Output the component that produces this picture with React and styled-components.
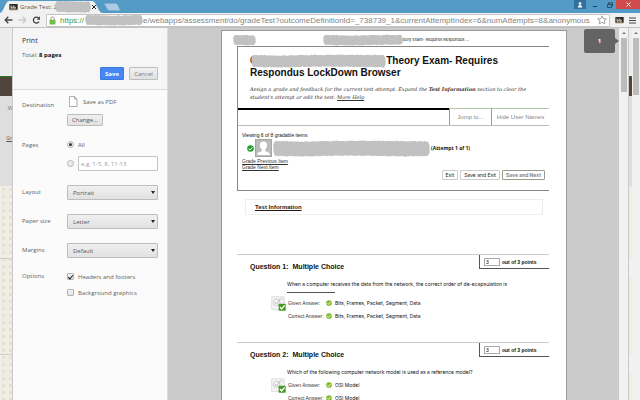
//dependencies
import { useState } from "react"
import styled, { createGlobalStyle } from "styled-components"

const GlobalStyle = createGlobalStyle`
    *, *::before, *::after{
        box-sizing: border-box;
    }
    html, body, #root{
        height: 100%;
        margin: 0;
    }
    body{
        overflow: hidden;
        font-family: "Open Sans", "Noto Sans", sans-serif;
    }
    h1, h2, h3, p{
        margin: 0;
        font-weight: normal;
    }
    button, input, select{
        font-family: inherit;
        margin: 0;
        padding: 0;
    }
`

const questions = [
    {
        id: 1,
        text: "When a computer receives the data from the network, the correct order of de-ecapsulation is",
        blank: true,
        answer: "Bits, Frames, Packet, Segment, Data",
    },
    {
        id: 2,
        text: "Which of the following computer network model is used as a reference model?",
        blank: false,
        answer: "OSI Model",
    },
]

// rough brush stroke that hides private text
const Scribble = ({width, height, shift}) => {
    const rough = (seed) => Math.abs(Math.sin(seed * 12.9898) * 43758.5453) % 1
    const top = []
    const bottom = []
    for(let x = 2; x <= width - 2; x += 1){
        top.push(`${x},${(0.6 + rough(x) * 0.9 + Math.sin(x * 0.05) * 0.4).toFixed(1)}`)
        bottom.unshift(`${x},${(height - 0.6 - rough(x + 500) * 0.9 + Math.sin(x * 0.06) * 0.4).toFixed(1)}`)
    }
    const points = [`0.6,${height * 0.7}`, `0.2,${height * 0.3}`, ...top, `${width - 0.6},${height * 0.3}`, `${width - 0.2},${height * 0.7}`, ...bottom]
    return <Stroke $shift={shift} width={width} height={height} viewBox={`0 0 ${width} ${height}`} aria-hidden="true">
        <polygon points={points.join(" ")} fill="#c1c1c1"/>
    </Stroke>
}

const GreenCheck = ({size, color}) => (
    <svg width={size} height={size} viewBox="0 0 14 14" aria-hidden="true">
        <circle cx="7" cy="7" r="6.6" fill={color}/>
        <path d="M3.4 7.4l2.6 2.8 4.8-5.4" fill="none" stroke="#fff" strokeWidth="2"/>
    </svg>
)

const AnswerIcon = () => (
    <svg width="15" height="15" viewBox="0 0 45 45" aria-hidden="true">
        <rect x="2" y="2" width="38" height="39" rx="2" fill="#f4f4f4" stroke="#d2d2d2" strokeWidth="2"/>
        <circle cx="17" cy="19" r="10" fill="none" stroke="#bcbcbc" strokeWidth="2"/>
        <path d="M12 18l5 6L28 8" fill="none" stroke="#bcbcbc" strokeWidth="3"/>
        <circle cx="32" cy="8" r="3" fill="none" stroke="#cfcfcf" strokeWidth="2"/>
        <rect x="23" y="23" width="21" height="21" rx="2" fill="#3f9c1c"/>
        <path d="M27 33l5 6 9-11" fill="none" stroke="#fff" strokeWidth="4"/>
    </svg>
)

const BbIcon = () => (
    <svg width="9" height="8" viewBox="0 0 27 24" aria-hidden="true">
        <rect x="1" y="3" width="25" height="17" fill="#2c2822"/>
        <path d="M6 7v9M6 12h4v4H6M14 7v9M14 12h5v4h-5" fill="none" stroke="#fff" strokeWidth="2"/>
        <path d="M1 21h25" stroke="#b99c58" strokeWidth="2"/>
    </svg>
)

const Browser = () => (
    <>
        <TabStrip>
            <Tab>
                <TabShape viewBox="0 0 106 13" preserveAspectRatio="none" aria-hidden="true">
                    <path d="M0 13C4 12 5 2 9 1H94c4 0 6 11 10 12z" fill="#f1f1f1"/>
                </TabShape>
                <BbIcon/>
                <TabTitle>Grade Test: 2</TabTitle>
                <Scribble width={36} height={13} shift={-2}/>
                <CloseTab type="button" aria-label="Close tab">
                    <svg width="4" height="4" viewBox="0 0 4 4"><path d="M0 0l4 4M4 0L0 4" stroke="#222" strokeWidth="1"/></svg>
                </CloseTab>
            </Tab>
            <NewTab type="button" aria-label="New tab">
                <svg width="17" height="8" viewBox="0 0 17 8"><path d="M1 .5h11q1 0 1.500 1l2.500 5.500q0 .6-1 .6H5q-1 0-1.500-1L.5 1.200q0-.7.5-.7z" fill="#a9cce2" stroke="#7fa9c4" strokeWidth=".5"/></svg>
            </NewTab>
            <WindowButtons>
                <WindowButton type="button" aria-label="Profile" $width={12} $color="#31709c">
                    <svg width="6" height="6" viewBox="0 0 6 6"><circle cx="3" cy="1.500" r="1.300" fill="#fff"/><path d="M.8 5.500q0-2.500 2.200-2.500t2.200 2.500z" fill="#fff"/></svg>
                </WindowButton>
                <WindowButton type="button" aria-label="Minimize" $width={17}>
                    <svg width="6" height="6" viewBox="0 0 6 6"><path d="M1 4.500h4" stroke="#1d3d52" strokeWidth="1"/></svg>
                </WindowButton>
                <WindowButton type="button" aria-label="Restore" $width={13}>
                    <svg width="6" height="6" viewBox="0 0 6 6"><path d="M.5 2.500h4v3h-4zM1.500 2V.8h4v3H5" fill="none" stroke="#1d3d52" strokeWidth=".8"/></svg>
                </WindowButton>
                <WindowButton type="button" aria-label="Close" $width={24} $color="#d0494b">
                    <svg width="5" height="5" viewBox="0 0 5 5"><path d="M.5.5l4 4M4.500.5l-4 4" stroke="#fff" strokeWidth="1"/></svg>
                </WindowButton>
            </WindowButtons>
        </TabStrip>
        <Toolbar>
            <IconButton type="button" aria-label="Back">
                <svg width="9" height="8" viewBox="0 0 9 8"><path d="M4.300.7L1.200 4l3.100 3.300M1.400 4H8.500" fill="none" stroke="#444" strokeWidth="1.300"/></svg>
            </IconButton>
            <IconButton type="button" aria-label="Forward">
                <svg width="9" height="8" viewBox="0 0 9 8"><path d="M4.700.7L7.800 4 4.700 7.300M7.600 4H.5" fill="none" stroke="#c8c8c8" strokeWidth="1.300"/></svg>
            </IconButton>
            <IconButton type="button" aria-label="Reload">
                <svg width="9" height="8" viewBox="0 0 9 8"><path d="M7 5.600A3 3 0 1 1 6.600 2" fill="none" stroke="#444" strokeWidth="1.300"/><path d="M8 .3v3.400H4.600z" fill="#444"/></svg>
            </IconButton>
            <AddressBar>
                <svg width="7" height="9" viewBox="0 0 7 9" aria-hidden="true"><path d="M1.800 4V2.600a1.700 1.700 0 0 1 3.400 0V4" fill="none" stroke="#9a9a9a" strokeWidth="1"/><rect x=".5" y="3.800" width="6" height="4.700" rx=".6" fill="#6cc04a"/></svg>
                <Address><Secure>https://</Secure><Scribble width={58} height={12} shift={1}/><span>e/webapps/assessment/do/gradeTest?outcomeDefinitionId=_738739_1&amp;currentAttemptIndex=6&amp;numAttempts=8&amp;anonymous</span></Address>
                <svg width="10" height="10" viewBox="0 0 10 10" aria-hidden="true"><path d="M5 .8l1.200 2.900 3.200.2-2.400 2 .8 3.100L5 7.300 2.200 9 3 5.900l-2.400-2 3.200-.2z" fill="#fff" stroke="#8d8d8d" strokeWidth=".8"/></svg>
            </AddressBar>
            <BbIcon/>
            <IconButton type="button" aria-label="Menu">
                <svg width="7" height="7" viewBox="0 0 7 7"><path d="M0 1h7M0 3.500h7M0 6h7" stroke="#444" strokeWidth="1.200"/></svg>
            </IconButton>
        </Toolbar>
    </>
)

const PrintPanel = () => {
    const [pages, setPages] = useState("all")
    const [headers, setHeaders] = useState(true)
    const [graphics, setGraphics] = useState(false)

    return <Panel>
        <PanelHeader>
            <PanelTitle>Print</PanelTitle>
            <Total>Total: <b>8 pages</b></Total>
            <PanelActions>
                <PrimaryButton type="button">Save</PrimaryButton>
                <CancelButton type="button">Cancel</CancelButton>
            </PanelActions>
        </PanelHeader>
        <Settings>
            <Setting>
                <SettingLabel $line={18}>Destination</SettingLabel>
                <SettingBody>
                    <Destination>
                        <svg width="12" height="11" viewBox="0 0 12 11" aria-hidden="true"><path d="M2.500.5h5l2.500 2.500v7.500H2.500zM7.500.5V3H10" fill="#fff" stroke="#9b9b9b" strokeWidth=".8"/></svg>
                        Save as PDF
                    </Destination>
                    <PanelButton type="button">Change...</PanelButton>
                </SettingBody>
            </Setting>
            <Setting>
                <SettingLabel $line={10}>Pages</SettingLabel>
                <SettingBody>
                    <Choice>
                        <Radio type="radio" name="pages" checked={pages === "all"} onChange={() => setPages("all")}/>
                        All
                    </Choice>
                    <RangeRow>
                        <Radio type="radio" name="pages" aria-label="Page range" checked={pages === "range"} onChange={() => setPages("range")}/>
                        <RangeInput type="text" aria-label="Pages to print" placeholder="e.g. 1-5, 8, 11-13"/>
                    </RangeRow>
                </SettingBody>
            </Setting>
            <SelectSetting id="layout" label="Layout" options={["Portrait", "Landscape"]}/>
            <SelectSetting id="paper-size" label="Paper size" options={["Letter", "Legal"]}/>
            <SelectSetting id="margins" label="Margins" options={["Default", "None"]}/>
            <Setting>
                <SettingLabel $line={8}>Options</SettingLabel>
                <SettingBody>
                    <Choice>
                        <Checkbox type="checkbox" checked={headers} onChange={() => setHeaders(!headers)}/>
                        Headers and footers
                    </Choice>
                    <Choice>
                        <Checkbox type="checkbox" checked={graphics} onChange={() => setGraphics(!graphics)}/>
                        Background graphics
                    </Choice>
                </SettingBody>
            </Setting>
        </Settings>
    </Panel>
}

const SelectSetting = ({id, label, options}) => (
    <Setting>
        <SettingLabel as="label" htmlFor={id} $line={15}>{label}</SettingLabel>
        <SelectBox>
            <Select id={id}>
                {options.map(option => <option key={option}>{option}</option>)}
            </Select>
        </SelectBox>
    </Setting>
)

const Question = ({question}) => {
    const {id, text, blank, answer} = question
    return <QuestionSection>
        <QuestionHeader>
            <QuestionTitle><span>Question {id}:</span><span>Multiple Choice</span></QuestionTitle>
            <Points>
                <PointsInput type="text" defaultValue="3" id={`points-${id}`}/>
                <label htmlFor={`points-${id}`}>out of 3 points</label>
            </Points>
        </QuestionHeader>
        <QuestionText>{text}</QuestionText>
        {blank && <Blank/>}
        <Answers>
            <AnswerIcon/>
            <AnswerRows>
                <AnswerLabel>Given Answer:</AnswerLabel><GreenCheck size={6} color="#7db928"/><AnswerText>{answer}</AnswerText>
                <AnswerLabel>Correct Answer:</AnswerLabel><GreenCheck size={6} color="#7db928"/><AnswerText>{answer}</AnswerText>
            </AnswerRows>
        </Answers>
    </QuestionSection>
}

const Page = () => (
    <Sheet>
        <RunningHead>
            <Scribble width={23} height={12} shift={0}/>
            <RunningTitle><Scribble width={80} height={12} shift={0}/>eory Exam- Requires Respondus ...</RunningTitle>
        </RunningHead>
        <Frame>
            <Intro>
                <ExamTitle>C<Scribble width={135} height={14} shift={-6}/>Theory Exam- Requires<br/>Respondus LockDown Browser</ExamTitle>
                <Instructions>
                    Assign a grade and feedback for the current test attempt. Expand the <b>Test Information</b> section to clear the<br/>
                    student's attempt or edit the test. <a href="#help">More Help</a>
                </Instructions>
            </Intro>
            <FrameTabs>
                <FrameSpacer/>
                <FrameTab type="button" $width={42}>Jump to...</FrameTab>
                <FrameTab type="button" $width={58}>Hide User Names</FrameTab>
            </FrameTabs>
            <Attempt>
                <p>Viewing 6 of 8 gradable items</p>
                <Student>
                    <GreenCheck size={7} color="#1fa32c"/>
                    <svg width="17" height="18" viewBox="0 0 17 18" aria-hidden="true">
                        <rect x=".5" y=".5" width="16" height="17" fill="#bcbcbc" stroke="#a5a5a5"/>
                        <path d="M8.500 2.500c5 0 4 6 1.600 8.200v1.300l4.400 2V16h-12v-2l4.400-2v-1.300C4.500 8.500 3.500 2.500 8.500 2.500z" fill="#fff"/>
                    </svg>
                    <Scribble width={157} height={17} shift={0}/>
                    <AttemptCount>(Attempt 1 of 1)</AttemptCount>
                </Student>
                <GradeLink href="#previous">Grade Previous Item</GradeLink>
                <GradeLink href="#next">Grade Next Item</GradeLink>
                <AttemptActions>
                    <PageButton type="button">Exit</PageButton>
                    <PageButton type="button">Save and Exit</PageButton>
                    <PageButton type="button" $muted>Save and Next</PageButton>
                </AttemptActions>
            </Attempt>
        </Frame>
        <TestInfo><a href="#info">Test Information</a></TestInfo>
        {questions.map(question => <Question key={question.id} question={question}/>)}
    </Sheet>
)

const App = () => (
    <Window>
        <GlobalStyle/>
        <Browser/>
        <Content>
            <SiteEdge $width={12}>
                <SiteTop/><SiteBanner/>
                <SiteGrey><span>Vi</span><u>Gr</u></SiteGrey>
                <SitePattern/>
            </SiteEdge>
            <PrintPanel/>
            <Preview>
                <Page/>
                <PageNumber>1</PageNumber>
            </Preview>
            <ScrollBar $width={9}><ScrollArrow/><ScrollThumb $height={54}/></ScrollBar>
            <SiteEdge $width={4} $line>
                <SiteTop/><SiteBanner/><SiteGrey/><SiteCards/>
            </SiteEdge>
            <ScrollBar $width={8}><ScrollArrow/><ScrollThumb $height={57}/></ScrollBar>
        </Content>
    </Window>
)

const Window = styled.div`
    display: flex;
    flex-direction: column;
    height: 100vh;
    background: #f1f1f1;
`
const Stroke = styled.svg`
    flex: none;
    display: inline-block;
    vertical-align: middle;
    margin-left: ${props => props.$shift}px;
`
// browser chrome
const TabStrip = styled.div`
    display: flex;
    align-items: flex-start;
    height: 13px;
    flex: none;
    background: #539ac7;
`
const Tab = styled.div`
    position: relative;
    display: flex;
    align-items: center;
    width: 104px;
    height: 13px;
    padding-left: 9px;
    > *{
        position: relative;
    }
`
const TabShape = styled.svg`
    && {
        position: absolute;
    }
    left: 0;
    top: 0;
    width: 100%;
    height: 100%;
`
const TabTitle = styled.span`
    margin-left: 2px;
    font-size: 6px;
    color: #555;
    white-space: nowrap;
`
const CloseTab = styled.button`
    display: flex;
    border: none;
    background: none;
    margin-left: auto;
    margin-right: 8px;
`
const NewTab = styled.button`
    display: flex;
    border: none;
    background: none;
    padding-top: 3px;
`
const WindowButtons = styled.div`
    display: flex;
    margin-left: auto;
`
const WindowButton = styled.button`
    display: flex;
    align-items: center;
    justify-content: center;
    width: ${props => props.$width}px;
    height: 9px;
    border: none;
    background: ${props => props.$color || "transparent"};
`
const Toolbar = styled.div`
    display: flex;
    align-items: center;
    gap: 5px;
    height: 15px;
    flex: none;
    padding: 0 4px;
    background: #f1f1f1;
    border-bottom: 1px solid #c2c2c2;
`
const IconButton = styled.button`
    display: flex;
    border: none;
    background: none;
`
const AddressBar = styled.div`
    display: flex;
    align-items: center;
    flex: 1;
    min-width: 0;
    height: 13px;
    padding: 0 2px;
    border: 1px solid #c4c4c4;
    border-radius: 1px;
    background: #fff;
`
const Address = styled.div`
    display: flex;
    align-items: center;
    flex: 1;
    min-width: 0;
    margin-left: 4px;
    font-family: "Liberation Sans", Arial, sans-serif;
    font-size: 8px;
    line-height: 11px;
    color: #858585;
    white-space: nowrap;
`
const Secure = styled.span`
    color: #3f9a45;
`
// site behind the dialog
const Content = styled.div`
    display: flex;
    flex: 1;
    min-height: 0;
`
const SiteEdge = styled.div`
    display: flex;
    flex-direction: column;
    flex: none;
    width: ${props => props.$width}px;
    border-left: ${props => props.$line ? "1px solid #c9c9c9" : "none"};
    overflow: hidden;
`
const SiteTop = styled.div`
    height: 48px;
    background: #ececec;
`
const SiteBanner = styled.div`
    height: 20px;
    border-top: 1px solid #1f7a1c;
    background: #51453b;
`
const SiteGrey = styled.div`
    display: flex;
    flex-direction: column;
    align-items: flex-end;
    gap: 20px;
    height: 90px;
    padding-top: 7px;
    background: #dedede;
    font-size: 5px;
    line-height: 10px;
    color: #555;
`
const SitePattern = styled.div`
    flex: 1;
    background-color: #efede4;
    background-image:
        linear-gradient(transparent 72px, #cfcdc6 72px, #cfcdc6 73px, transparent 73px, transparent 168px, #cfcdc6 168px, #cfcdc6 169px, transparent 169px),
        radial-gradient(circle, #e4e0d4 2px, transparent 2px);
    background-size: 100% 100%, 7px 7px;
`
// the pattern shows between the white cards of the site
const SiteCards = styled.div`
    flex: 1;
    background: linear-gradient(#efede0 73px, #f3f3f3 73px, #f3f3f3 91px, #efede0 91px, #efede0 169px, #f3f3f3 169px, #f3f3f3 187px, #efede0 187px);
`
const ScrollBar = styled.div`
    display: flex;
    flex-direction: column;
    align-items: center;
    flex: none;
    width: ${props => props.$width}px;
    background: #f1f1f1;
`
const ScrollArrow = styled.div`
    margin: 4px 0 3px;
    border: 2px solid transparent;
    border-top: none;
    border-bottom-color: #777;
`
const ScrollThumb = styled.div`
    width: 6px;
    height: ${props => props.$height}px;
    margin-top: 1px;
    background: #bcbcbc;
`
// print settings
const Panel = styled.aside`
    flex: none;
    width: 156px;
    border-left: 1px solid #c9c9c9;
    border-right: 1px solid #dcdcdc;
    background: #fbfbfb;
    color: #5f5f5f;
    font-size: 6px;
    line-height: 8px;
`
const PanelHeader = styled.header`
    padding: 7px 9px 9px;
    background: #f6f6f6;
    border-bottom: 1px solid #d9d9d9;
`
const PanelTitle = styled.h1`
    font-size: 7px;
    line-height: 12px;
    color: #333;
`
const Total = styled.p`
    margin-top: 4px;
    b{
        color: #111;
    }
`
const PanelActions = styled.div`
    display: flex;
    justify-content: flex-end;
    gap: 5px;
    margin-top: 8px;
`
const PanelButton = styled.button`
    width: 36px;
    height: 12px;
    border: 1px solid #bdbdbd;
    border-radius: 1px;
    background: linear-gradient(#f0f0f0, #e1e1e1);
    color: #555;
    font-size: 6px;
    line-height: 8px;
`
const CancelButton = styled(PanelButton)`
    width: 29px;
    height: 13px;
    color: #777;
`
const PrimaryButton = styled(PanelButton)`
    width: 24px;
    height: 13px;
    border-color: #3b79e0;
    background: #4787f3;
    color: #fff;
    font-weight: bold;
`
const Settings = styled.div`
    display: flex;
    flex-direction: column;
    gap: 14px;
    padding: 6px 9px;
`
const Setting = styled.div`
    display: grid;
    grid-template-columns: 45px minmax(0, 1fr);
`
const SettingLabel = styled.span`
    line-height: ${props => props.$line}px;
`
const SettingBody = styled.div`
    display: flex;
    flex-direction: column;
    align-items: flex-start;
    gap: 7px;
`
const Destination = styled.div`
    display: flex;
    align-items: center;
    gap: 4px;
    height: 11px;
`
const Choice = styled.label`
    display: flex;
    align-items: center;
    gap: 4px;
    height: 9px;
`
const RangeRow = styled.div`
    display: flex;
    align-items: center;
    gap: 4px;
    width: 100%;
`
const Tick = styled.input`
    appearance: none;
    flex: none;
    display: grid;
    place-items: center;
    width: 7px;
    height: 7px;
    border: 1px solid #b5b5b5;
    background: linear-gradient(#f4f4f4, #e2e2e2);
`
const Radio = styled(Tick)`
    border-radius: 50%;
    &:checked::after{
        content: "";
        width: 3px;
        height: 3px;
        border-radius: 50%;
        background: #333;
    }
`
const Checkbox = styled(Tick)`
    border-radius: 1px;
    &:checked::after{
        content: "";
        width: 3px;
        height: 5px;
        border: solid #222;
        border-width: 0 1px 1px 0;
        transform: rotate(40deg);
    }
`
const RangeInput = styled.input`
    flex: 1;
    width: 0;
    min-width: 0;
    height: 15px;
    padding: 0 2px;
    border: 1px solid #c4c4c4;
    border-radius: 1px;
    background: #fff;
    font-size: 6px;
    &::placeholder{
        color: #9c9c9c;
    }
`
const SelectBox = styled.div`
    position: relative;
    height: 15px;
    &::after{
        content: "";
        position: absolute;
        right: 3px;
        top: 6px;
        border: 2px solid transparent;
        border-top: 3px solid #222;
        border-bottom: none;
        pointer-events: none;
    }
`
const Select = styled.select`
    appearance: none;
    display: block;
    width: 100%;
    height: 15px;
    padding: 0 5px;
    border: 1px solid #bdbdbd;
    border-radius: 1px;
    background: linear-gradient(#f0f0f0, #e1e1e1);
    color: #555;
    font-size: 6px;
`
// print preview
const Preview = styled.main`
    position: relative;
    flex: 1;
    min-width: 0;
    overflow: hidden;
    padding: 2px 52px 0 53px;
    background: #cbcbcb;
`
const PageNumber = styled.div`
    position: absolute;
    top: 1px;
    right: 4px;
    width: 31px;
    height: 24px;
    border-radius: 2px;
    background: #646464;
    color: #fff;
    font: bold 6px/24px "Open Sans", sans-serif;
    text-align: center;
    &::after{
        content: "";
        position: absolute;
        left: 31px;
        top: 9px;
        border: 3px solid transparent;
        border-left: 4px solid #646464;
        border-right: none;
    }
`
const Sheet = styled.article`
    min-height: 100%;
    padding: 3px 17px 0 15px;
    border: 1px solid #999;
    border-width: 1px 1px 0 1px;
    background: #fff;
    color: #111;
    font-family: "Liberation Sans", Arial, sans-serif;
    font-size: 5px;
    line-height: 6px;
    svg{
        flex: none;
    }
`
const RunningHead = styled.div`
    display: flex;
    align-items: center;
    justify-content: space-between;
    height: 12px;
    margin-left: -4px;
`
const RunningTitle = styled.div`
    display: flex;
    align-items: center;
    margin-right: 80px;
    font-family: Inter, sans-serif;
    font-size: 4px;
    white-space: nowrap;
`
const Frame = styled.section`
    border: 1px solid #888;
    border-right: none;
`
const Intro = styled.div`
    height: 61px;
    padding: 7px 0 0 12px;
`
const ExamTitle = styled.h1`
    font-size: 10px;
    font-weight: bold;
    line-height: 10px;
    white-space: nowrap;
`
const Instructions = styled.p`
    margin-top: 7px;
    font: italic 5px/8px "DejaVu Serif", serif;
    color: #333;
    white-space: nowrap;
    a{
        color: inherit;
    }
`
const FrameTabs = styled.div`
    display: flex;
    height: 18px;
    border-bottom: 1px solid #bbb;
`
const FrameSpacer = styled.div`
    flex: 1;
    border-top: 2px solid #000;
`
const FrameTab = styled.button`
    width: ${props => props.$width}px;
    border: none;
    border-top: 1px solid #b5c7ab;
    border-left: 1px solid #999;
    background: #fff;
    color: #888;
    font-size: 6px;
    line-height: 8px;
    white-space: nowrap;
`
const Attempt = styled.div`
    display: flex;
    flex-direction: column;
    align-items: flex-start;
    padding: 6px 4px 10px;
`
const Student = styled.div`
    display: flex;
    align-items: center;
    gap: 1px;
    height: 20px;
    margin-left: 5px;
    white-space: nowrap;
`
const AttemptCount = styled.b`
    font-family: "Open Sans", sans-serif;
`
const GradeLink = styled.a`
    color: #333;
`
const AttemptActions = styled.div`
    display: flex;
    align-self: flex-end;
    gap: 2px;
`
const PageButton = styled.button`
    height: 10px;
    padding: 0 3px;
    border: 1px solid ${props => props.$muted ? "#9b9a88" : "#ccc"};
    border-radius: 1px;
    background: #fff;
    color: ${props => props.$muted ? "#888" : "#222"};
    font-size: 5px;
    font-weight: ${props => props.$muted ? "bold" : "normal"};
    font-family: Inter, sans-serif;
    line-height: 8px;
    white-space: nowrap;
`
const TestInfo = styled.section`
    margin: 8px 6px 39px 8px;
    padding: 4px 9px;
    border: 1px solid #eee;
    font-size: 6px;
    font-weight: bold;
    a{
        color: #2b1a12;
    }
`
const QuestionSection = styled.section`
    height: 88px;
`
const QuestionHeader = styled.header`
    display: flex;
    justify-content: space-between;
    height: 15px;
    border-top: 1px solid #ccc;
`
const QuestionTitle = styled.h2`
    display: flex;
    gap: 4px;
    padding: 8px 0 0 13px;
    font-size: 7px;
    font-weight: bold;
    line-height: 8px;
`
const Points = styled.div`
    display: flex;
    align-items: center;
    gap: 2px;
    width: 70px;
    padding-left: 4px;
    border: solid #555;
    border-width: 0 0 1px 1px;
    font-weight: bold;
`
const PointsInput = styled.input`
    width: 16px;
    height: 8px;
    padding: 0 1px;
    border: 1px solid #aaa;
    font-size: 5px;
`
const QuestionText = styled.p`
    margin: 12px 0 0 50px;
    font-family: Inter, sans-serif;
    white-space: nowrap;
`
const Blank = styled.div`
    width: 48px;
    height: 6px;
    margin-left: 50px;
    border-bottom: 1px solid #555;
`
const Answers = styled.div`
    display: flex;
    gap: 2px;
    margin: 3px 0 0 34px;
`
const AnswerRows = styled.div`
    display: grid;
    grid-template-columns: 35px 6px auto;
    column-gap: 3px;
    align-items: center;
    grid-auto-rows: 13px;
    white-space: nowrap;
`
const AnswerLabel = styled.span`
    color: #333;
`
const AnswerText = styled.span`
    font-family: Inter, sans-serif;
`
export default App
